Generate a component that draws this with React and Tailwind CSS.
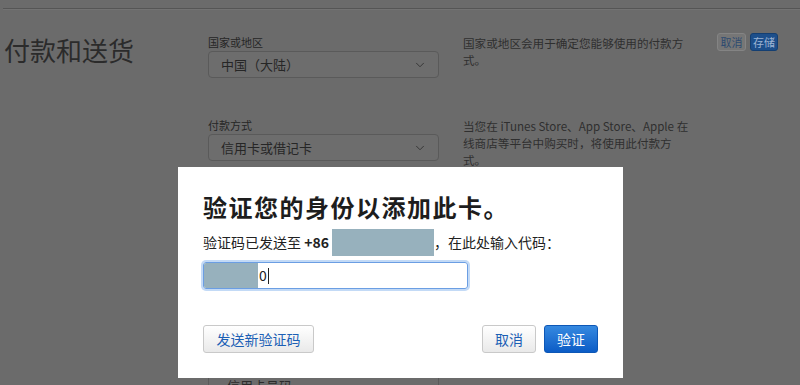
import { ChevronDown } from "lucide-react";

function FakeSelect({ value }) {
  return (
    <div className="flex items-center justify-between w-[231px] h-[27px] pl-[12px] pr-[11px] border border-[#5a5a5a] rounded-[4px] bg-[#6d6d6d]">
      <span className="text-[13px] text-[#262626]">{value}</span>
      <ChevronDown size={14} strokeWidth={1.6} className="text-[#333]" />
    </div>
  );
}

function Row({ label, value, desc, className = "" }) {
  return (
    <div className={`flex ${className}`}>
      <div className="flex flex-col w-[231px]">
        <div className="text-[11px] leading-[14px] h-[15px] text-[#262626]">{label}</div>
        <div className="mt-[1px]">
          <FakeSelect value={value} />
        </div>
      </div>
      <p className="ml-[24px] w-[228px] text-[11.6px] leading-[17px] text-[#2f2f2f]">{desc}</p>
    </div>
  );
}

export default function App() {
  return (
    <div className="relative w-[800px] h-[385px] overflow-hidden bg-[#6b6b6b] font-['Noto_Sans_CJK_SC','Noto_Sans',sans-serif]">
      {/* page behind the overlay */}
      <div className="ml-[3px] pt-[8px]">
        <div className="h-px bg-[#555]" />
        <div className="h-px bg-[#737373]" />
      </div>

      <div className="flex pt-[25px]">
        <h1 className="w-[208px] pl-[4px] text-[26px] leading-[30px] font-normal text-[#2b2b2b]">付款和送货</h1>

        <div className="flex flex-col">
          <Row
            label="国家或地区"
            value="中国（大陆）"
            desc="国家或地区会用于确定您能够使用的付款方式。"
          />
          <Row
            className="mt-[40px]"
            label="付款方式"
            value="信用卡或借记卡"
            desc="当您在 iTunes Store、App Store、Apple 在线商店等平台中购买时，将使用此付款方式。"
          />
          <div className="mt-[180px] w-[231px] h-[40px] border border-[#5a5a5a] rounded-[4px] pl-[18px] pt-[28px] text-[13px] leading-[16px] text-[#2b2b2b]">
            信用卡号码
          </div>
        </div>

        <div className="flex gap-[4px] ml-[26px] mt-[-2px] h-[18px]">
          <button className="w-[29px] h-[18px] rounded-[3px] border border-[#848484] bg-[#767676] text-[11px] leading-none text-[#2d4a70]">取消</button>
          <button className="w-[28px] h-[18px] rounded-[3px] border border-[#143f72] bg-[#1d4f8b] text-[11px] leading-none text-[#9cb4d4]">存储</button>
        </div>
      </div>

      {/* dialog */}
      <div className="absolute left-[178px] top-[167px] w-[445px] h-[211px] bg-white px-[25px] pt-[25px] flex flex-col">
        <h2 className="text-[24px] leading-[29px] font-bold tracking-[1.5px] text-[#1d1d1d]">验证您的身份以添加此卡。</h2>
        <div className="flex items-center mt-[8px] text-[14px] text-[#222]">
          <span>验证码已发送至&nbsp;</span>
          <span className="font-bold">+86</span>
          <span className="w-[3px]" />
          <span className="w-[102px] h-[27px] bg-[#97b1bd]" />
          <span>，在此处输入代码：</span>
        </div>
        <div className="mt-[6px] flex items-center w-[265px] h-[27px] border border-[#6b9ee3] rounded-[3px] shadow-[0_0_0_2px_#c3daf6] overflow-hidden">
          <span className="w-[54px] h-full bg-[#97b1bd]" />
          <span className="text-[14px] text-[#222] ml-[1px]">0</span>
          <span className="w-px h-[16px] bg-[#222] ml-[1px]" />
        </div>
        <div className="flex items-center justify-between mt-[36px]">
          <button className="w-[111px] h-[28px] rounded-[3px] border border-[#c9c9c9] bg-gradient-to-b from-white to-[#e9e9e9] text-[14px] text-[#1b5fb5]">发送新验证码</button>
          <div className="flex gap-[8px]">
            <button className="w-[54px] h-[28px] rounded-[3px] border border-[#c9c9c9] bg-gradient-to-b from-white to-[#e9e9e9] text-[14px] text-[#1b5fb5]">取消</button>
            <button className="w-[54px] h-[28px] rounded-[3px] border border-[#0d57b6] bg-gradient-to-b from-[#3589e0] to-[#0b5cc6] text-[14px] text-white">验证</button>
          </div>
        </div>
      </div>
    </div>
  );
}
